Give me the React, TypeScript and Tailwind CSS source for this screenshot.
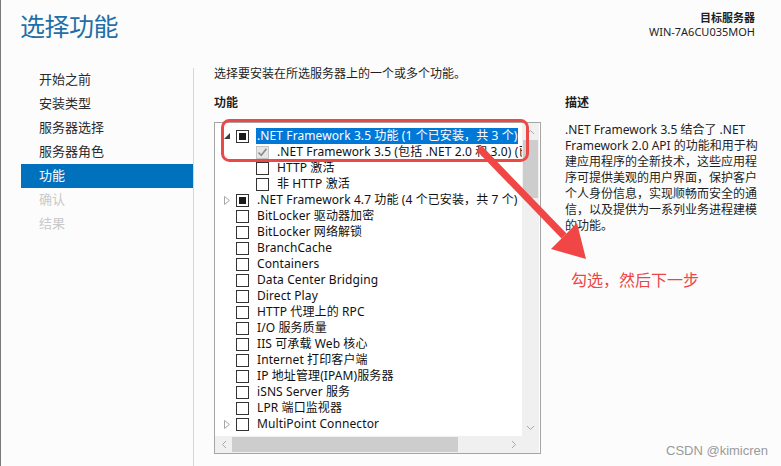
import React from "react";

type Row = {
  lvl: 1 | 2;
  exp?: "open" | "closed";
  cb: "empty" | "partial" | "grayCheck";
  text: string;
  sel?: boolean;
};

const rows: Row[] = [
  { lvl: 1, exp: "open", cb: "partial", text: ".NET Framework 3.5 功能 (1 个已安装，共 3 个)", sel: true },
  { lvl: 2, cb: "grayCheck", text: ".NET Framework 3.5 (包括 .NET 2.0 和 3.0) (已安装)" },
  { lvl: 2, cb: "empty", text: "HTTP 激活" },
  { lvl: 2, cb: "empty", text: "非 HTTP 激活" },
  { lvl: 1, exp: "closed", cb: "partial", text: ".NET Framework 4.7 功能 (4 个已安装，共 7 个)" },
  { lvl: 1, cb: "empty", text: "BitLocker 驱动器加密" },
  { lvl: 1, cb: "empty", text: "BitLocker 网络解锁" },
  { lvl: 1, cb: "empty", text: "BranchCache" },
  { lvl: 1, cb: "empty", text: "Containers" },
  { lvl: 1, cb: "empty", text: "Data Center Bridging" },
  { lvl: 1, cb: "empty", text: "Direct Play" },
  { lvl: 1, cb: "empty", text: "HTTP 代理上的 RPC" },
  { lvl: 1, cb: "empty", text: "I/O 服务质量" },
  { lvl: 1, cb: "empty", text: "IIS 可承载 Web 核心" },
  { lvl: 1, cb: "empty", text: "Internet 打印客户端" },
  { lvl: 1, cb: "empty", text: "IP 地址管理(IPAM)服务器" },
  { lvl: 1, cb: "empty", text: "iSNS Server 服务" },
  { lvl: 1, cb: "empty", text: "LPR 端口监视器" },
  { lvl: 1, exp: "closed", cb: "empty", text: "MultiPoint Connector" },
];

const navItems = [
  { t: "开始之前", s: "n" },
  { t: "安装类型", s: "n" },
  { t: "服务器选择", s: "n" },
  { t: "服务器角色", s: "n" },
  { t: "功能", s: "sel" },
  { t: "确认", s: "dis" },
  { t: "结果", s: "dis" },
];

const desc = [
  ".NET Framework 3.5 结合了 .NET",
  "Framework 2.0 API 的功能和用于构",
  "建应用程序的全新技术，这些应用程",
  "序可提供美观的用户界面，保护客户",
  "个人身份信息，实现顺畅而安全的通",
  "信，以及提供为一系列业务进程建模",
  "的功能。",
];

function Checkbox({ kind }: { kind: Row["cb"] }) {
  if (kind === "grayCheck") {
    return (
      <div className="w-[13px] h-[13px] shrink-0 border border-[#c4c4c4] bg-[#e6e6e6] flex items-center justify-center">
        <svg width="11" height="11" viewBox="0 0 11 11">
          <path d="M1.5 5.5 L4.2 8.3 L9.5 1.8" fill="none" stroke="#8a8a8a" strokeWidth="1.6" />
        </svg>
      </div>
    );
  }
  return (
    <div className="w-[13px] h-[13px] shrink-0 border border-[#333333] bg-white flex items-center justify-center">
      {kind === "partial" && <div className="w-[7px] h-[7px] bg-[#1a1a1a]" />}
    </div>
  );
}

function Expander({ exp }: { exp?: Row["exp"] }) {
  if (exp === "open") {
    return (
      <svg width="6" height="6" viewBox="0 0 6 6">
        <polygon points="6,0 6,6 0,6" fill="#3c3c3c" />
      </svg>
    );
  }
  if (exp === "closed") {
    return (
      <svg width="6" height="9" viewBox="0 0 6 9">
        <polygon points="0.5,0.5 5.5,4.5 0.5,8.5" fill="none" stroke="#a6a6a6" strokeWidth="1" />
      </svg>
    );
  }
  return null;
}

export default function App() {
  return (
    <div
      className="relative w-[781px] h-[466px] overflow-hidden bg-[#fcfcfc] border-l border-[#7a7a7a] text-[#1e1e1e]"
      style={{ fontFamily: '"Segoe UI", "Noto Sans", "Microsoft YaHei", "Noto Sans CJK SC", sans-serif' }}
    >
      {/* header */}
      <div className="flex justify-between h-[66px]">
        <div className="pl-[19px] pt-[9px] text-[25px] leading-[34px] text-[#1f6fa8] tracking-[-0.5px]">选择功能</div>
        <div className="pr-[26px] pt-[11px] text-right text-[11px] leading-[14px] text-[#1e1e1e]">
          <div className="font-semibold">目标服务器</div>
          <div>WIN-7A6CU035MOH</div>
        </div>
      </div>

      {/* body */}
      <div className="flex h-[400px]">
        <div className="ml-[20px] w-[172px] pt-[2px] flex flex-col">
          {navItems.map((n) => (
            <div
              key={n.t}
              className={
                "h-6 pl-[18px] flex items-center text-[13px] " +
                (n.s === "sel"
                  ? "bg-[#0071bc] text-white"
                  : n.s === "dis"
                  ? "text-[#c9c9c9]"
                  : "text-[#2b2b2b]")
              }
            >
              {n.t}
            </div>
          ))}
        </div>
        <div className="mt-[2px] border-l border-[#d6d6d6]" />

        <div className="pl-[20px] flex">
          <div className="w-[327px] flex flex-col">
            <div className="h-4 text-[12px] leading-4 whitespace-nowrap">选择要安装在所选服务器上的一个或多个功能。</div>
            <div className="mt-[13px] h-4 text-[12px] leading-4 font-bold">功能</div>
            <div className="mt-[11px] w-[327px] h-[332px] border border-[#a5a5a5] bg-white flex flex-col">
              <div className="flex h-[313px]">
                <div className="w-[307px] h-full overflow-hidden pt-[5px]">
                  {rows.map((r, i) => (
                    <div key={i} className="h-4 flex items-center whitespace-nowrap text-[12px] leading-4">
                      <div className="w-[21px] shrink-0 flex items-center justify-center pl-[2px]">
                        <Expander exp={r.exp} />
                      </div>
                      {r.lvl === 2 && <div className="w-[20px] shrink-0" />}
                      <Checkbox kind={r.cb} />
                      <div className="w-[7px] shrink-0" />
                      <span className={"px-[1px] tracking-[0.1px] " + (r.sel ? "bg-[#0078d7] text-white" : "text-[#111]")}>{r.text}</span>
                    </div>
                  ))}
                </div>
                <div className="w-[17px] h-full bg-[#f0f0f0] flex flex-col items-center">
                  <div className="h-[17px] flex items-center justify-center">
                    <svg width="9" height="6" viewBox="0 0 9 6">
                      <path d="M1 5 L4.5 1.5 L8 5" fill="none" stroke="#a8a8a8" strokeWidth="1" />
                    </svg>
                  </div>
                  <div className="w-[15px] h-[58px] bg-[#cdcdcd]" />
                  <div className="flex-1" />
                  <div className="h-[17px] flex items-center justify-center">
                    <svg width="9" height="6" viewBox="0 0 9 6">
                      <path d="M1 1 L4.5 4.5 L8 1" fill="none" stroke="#a8a8a8" strokeWidth="1" />
                    </svg>
                  </div>
                </div>
              </div>
              <div className="flex h-[17px]">
                <div className="w-[307px] h-full bg-[#f0f0f0] flex items-center">
                  <div className="w-[17px] h-full flex items-center justify-center">
                    <svg width="6" height="9" viewBox="0 0 6 9">
                      <path d="M5 1 L1.5 4.5 L5 8" fill="none" stroke="#a8a8a8" strokeWidth="1" />
                    </svg>
                  </div>
                  <div className="w-[226px] h-[15px] bg-[#cdcdcd]" />
                  <div className="flex-1" />
                  <div className="w-[17px] h-full flex items-center justify-center">
                    <svg width="6" height="9" viewBox="0 0 6 9">
                      <path d="M1 1 L4.5 4.5 L1 8" fill="none" stroke="#a8a8a8" strokeWidth="1" />
                    </svg>
                  </div>
                </div>
                <div className="w-[17px] h-full bg-[#f0f0f0]" />
              </div>
            </div>
          </div>

          <div className="ml-[24px] w-[200px] flex flex-col">
            <div className="h-4 mt-[29px] text-[12px] leading-4 font-bold">描述</div>
            <div className="mt-[11px] text-[12px] leading-4 text-[#1e1e1e]">
              {desc.map((l, i) => (
                <div key={i} className="h-4 whitespace-nowrap">{l}</div>
              ))}
            </div>
          </div>
        </div>
      </div>

      {/* annotations */}
      <svg className="absolute left-0 top-0 pointer-events-none" width="781" height="466" viewBox="0 0 781 466">
        <rect x="221.5" y="120.5" width="305" height="40" rx="7" fill="none" stroke="#ec4848" strokeWidth="3" />
        <line x1="478" y1="148" x2="563" y2="236" stroke="#f04646" strokeWidth="7" />
        <polygon points="585,259 576,223 550,249" fill="#f04646" />
      </svg>
      <div className="absolute left-[570px] top-[270px] text-[16px] leading-5 text-[#ee4444] whitespace-nowrap">
        勾选，然后下一步
      </div>
      <div
        className="absolute left-[665px] top-[443px] text-[13px] leading-4 text-[#9a9a9a] whitespace-nowrap"
        style={{ fontFamily: '"Liberation Sans", Arial, sans-serif' }}
      >
        CSDN @kimicren
      </div>
    </div>
  );
}
